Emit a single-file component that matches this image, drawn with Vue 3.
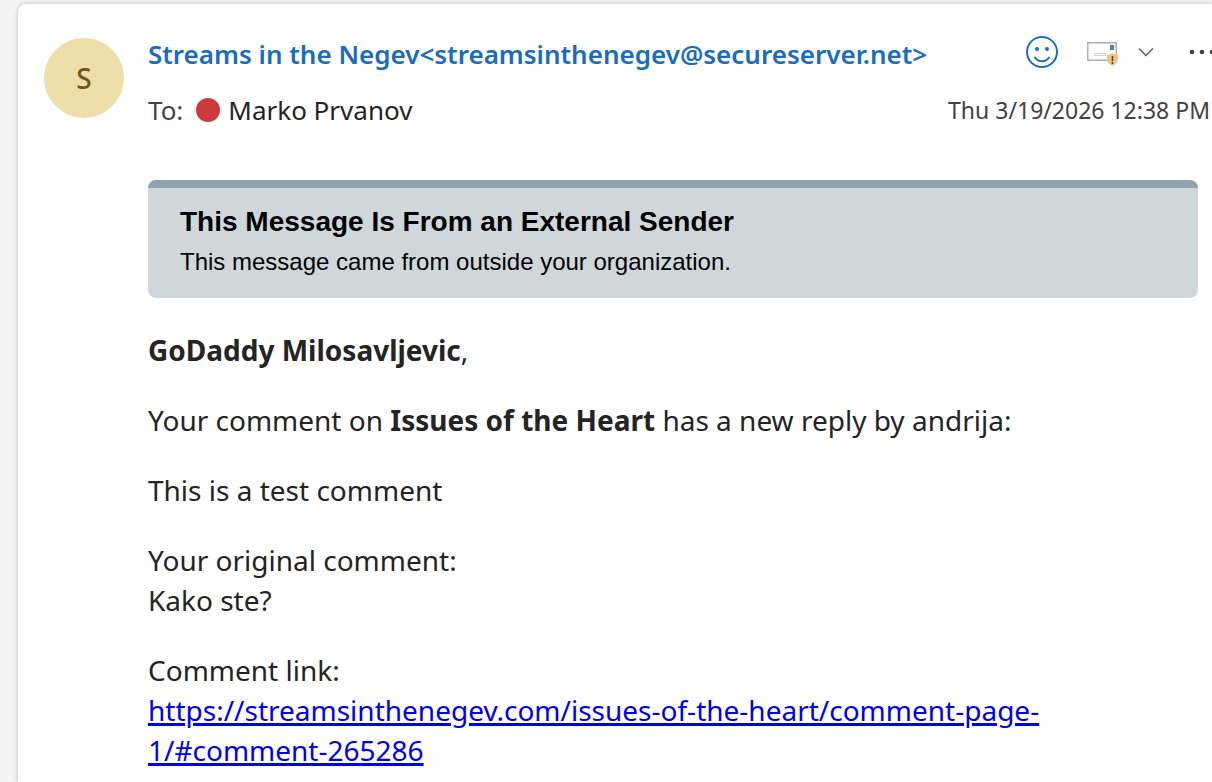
<script setup>
const link = 'https://streamsinthenegev.com/issues-of-the-heart/comment-page-1/#comment-265286'
</script>

<template>
  <main class="page">
    <article class="card">
      <header class="head">
        <div class="avatar">S</div>
        <div class="meta">
          <div class="row">
            <h1 class="from">Streams in the Negev&lt;streamsinthenegev@secureserver.net&gt;</h1>
            <div class="actions">
              <button class="smile" aria-label="React">
                <svg width="34" height="34" viewBox="0 0 34 34" fill="none" stroke="#1a6fc4" stroke-width="2" stroke-linecap="round">
                  <circle cx="17" cy="17" r="15" />
                  <path d="M10 22.500c3.500 5 10.500 5 14 0" />
                  <circle cx="12" cy="14" r="2" fill="#1a6fc4" stroke="none" />
                  <circle cx="22" cy="14" r="2" fill="#1a6fc4" stroke="none" />
                </svg>
              </button>
              <button class="cert" aria-label="Signature">
                <svg width="33" height="28" viewBox="0 0 33 28">
                  <rect x="1.750" y="4.750" width="28.500" height="17.500" fill="#fff" stroke="#b0b0b0" stroke-width="1.500" />
                  <rect x="24" y="7" width="4" height="5" fill="#4682bc" />
                  <path d="M8 15.500h12M8 17.500h12" stroke="#cfcfcf" />
                  <path d="M26.500 15q2.500 2 5.500 2v4q-.5 4.500-5.500 7q-5-2.500-5.500-7v-4q3 0 5.500-2z" fill="#ecc57b" />
                  <path d="M26.500 18v5M26.500 24v2" stroke="#4c4434" stroke-width="1.500" />
                </svg>
              </button>
              <button class="chev" aria-label="Signature details">
                <svg width="16" height="10" viewBox="0 0 16 10" fill="none" stroke="#555" stroke-width="1.300"><path d="M1 1.500l7 7 7-7" /></svg>
              </button>
              <button class="more" aria-label="More">
                <svg width="26" height="6" viewBox="0 0 26 6" fill="#424242"><circle cx="3" cy="3" r="2.300" /><circle cx="13" cy="3" r="2.300" /><circle cx="23" cy="3" r="2.300" /></svg>
              </button>
            </div>
          </div>
          <div class="row second">
            <div class="to"><span class="label">To:</span><i class="dot"></i><span>Marko Prvanov</span></div>
            <time class="time">Thu 3/19/2026 12:38 PM</time>
          </div>
        </div>
      </header>
      <section class="banner">
        <h2>This Message Is From an External Sender</h2>
        <p>This message came from outside your organization.</p>
      </section>
      <section class="body">
        <p><b>GoDaddy Milosavljevic</b>,</p>
        <p>Your comment on <b>Issues of the Heart</b> has a new reply by andrija:</p>
        <p>This is a test comment</p>
        <p>Your original comment:<br />Kako ste?</p>
        <p>Comment link:<br /><a :href="link">{{ link }}</a></p>
      </section>
    </article>
  </main>
</template>

<style>
html { background: #f4f4f4; overflow: hidden; }
</style>

<style scoped>
.page { padding: 4px 0 0 18px; box-sizing: border-box; min-height: 100vh; display: flex; overflow: hidden; font-family: "Segoe UI", "Noto Sans", "Open Sans", sans-serif; color: #242424; }
.card { flex: 1; min-width: 0; background: #fff; border-radius: 8px 0 0 0; box-shadow: 0 0 4px rgba(0, 0, 0, 0.25); padding: 34px 0 0 26px; }
.head { display: flex; gap: 24px; }
.avatar { flex: none; width: 80px; height: 80px; border-radius: 50%; background: #ecdfa9; color: #6d5716; font-size: 28px; font-weight: 500; display: flex; align-items: center; justify-content: center; }
.meta { flex: 1; min-width: 0; }
.row { display: flex; justify-content: space-between; height: 32px; align-items: center; white-space: nowrap; }
.second { margin-top: 24px; padding-right: 2px; }
.from { margin: 0; font-size: 26px; font-weight: 600; color: #1a6cbd; }
.actions { display: flex; align-items: center; align-self: flex-start; height: 28px; }
button { border: 0; padding: 0; background: none; display: flex; }
.cert { margin-left: 27px; }
.chev { margin-left: 19px; }
.more { margin-left: 35px; margin-right: -3px; }
.to { display: flex; align-items: center; font-size: 26px; }
.label { color: #424242; }
.dot { width: 24px; height: 24px; border-radius: 50%; background: #ce393c; margin: 0 8px 0 13px; }
.time { font-size: 23px; color: #424242; }
.banner { margin: 54px 14px 0 104px; padding: 16px 32px 18px; border-top: 8px solid #90a2ac; border-radius: 8px; background: #d0d7da; color: #000; font-family: "Liberation Sans", Arial, sans-serif; }
.banner h2 { margin: 0; font-size: 28px; line-height: 36px; }
.banner p { margin: 4px 0 0; font-size: 24px; line-height: 36px; }
.body { margin: 32px 136px 0 104px; font-size: 28px; line-height: 40px; }
.body p { margin: 0 0 30px; }
.body p:last-child { margin-bottom: 0; }
.body a { color: #0000ee; text-decoration-thickness: 3px; }
</style>
